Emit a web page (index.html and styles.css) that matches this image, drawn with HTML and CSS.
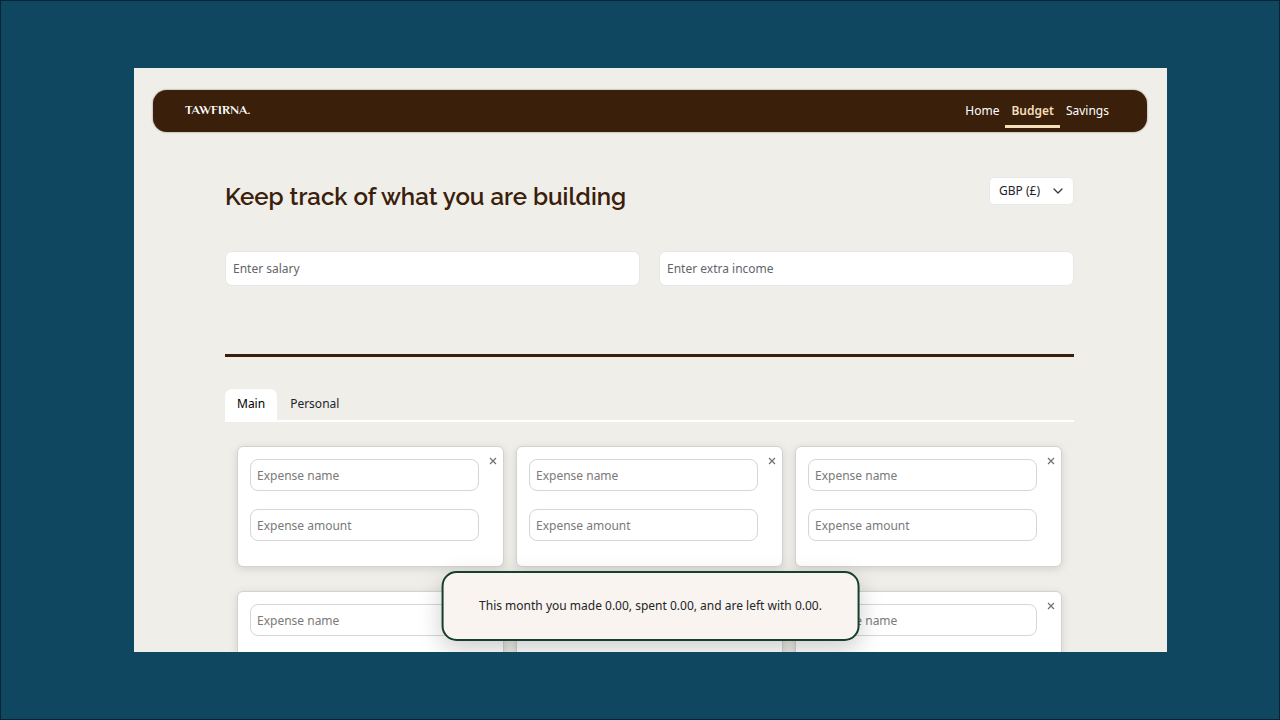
FILE: index.html
```
<!DOCTYPE html>
<html lang="en">
<head>
  <meta charset="UTF-8">
  <meta name="viewport" content="width=device-width, initial-scale=1.0">
  <title>Tawfirna - Budget</title>
  <link rel="stylesheet" href="styles.css">
</head>
<body>

  <div class="window">
    <nav class="navbar">
      <a href="#" class="logo">TAWFIRNA.</a>
      <div class="nav-links">
        <a href="#">Home</a>
        <a href="#" class="active">Budget</a>
        <a href="#">Savings</a>
      </div>
    </nav>

    <main class="container">
      <header class="page-header">
        <h1>Keep track of what you are building</h1>
        <div class="currency">
          <select aria-label="Currency">
            <option>GBP (£)</option>
            <option>USD ($)</option>
            <option>EUR (€)</option>
          </select>
          <svg class="chevron" viewBox="0 0 10 10" aria-hidden="true"><path d="M1 3l4 4 4-4"/></svg>
        </div>
      </header>

      <form class="income">
        <input type="text" placeholder="Enter salary" aria-label="Enter salary">
        <input type="text" placeholder="Enter extra income" aria-label="Enter extra income">
      </form>

      <hr class="divider">

      <div class="tabs">
        <button type="button" class="tab active">Main</button>
        <button type="button" class="tab">Personal</button>
      </div>

      <div class="cards">
        <div class="card">
          <div class="fields">
            <input type="text" placeholder="Expense name" aria-label="Expense name">
            <input type="text" placeholder="Expense amount" aria-label="Expense amount">
          </div>
          <button type="button" class="remove" aria-label="Remove"><svg viewBox="0 0 8 8"><path d="M1 1l6 6M7 1l-6 6"/></svg></button>
        </div>
        <div class="card">
          <div class="fields">
            <input type="text" placeholder="Expense name" aria-label="Expense name">
            <input type="text" placeholder="Expense amount" aria-label="Expense amount">
          </div>
          <button type="button" class="remove" aria-label="Remove"><svg viewBox="0 0 8 8"><path d="M1 1l6 6M7 1l-6 6"/></svg></button>
        </div>
        <div class="card">
          <div class="fields">
            <input type="text" placeholder="Expense name" aria-label="Expense name">
            <input type="text" placeholder="Expense amount" aria-label="Expense amount">
          </div>
          <button type="button" class="remove" aria-label="Remove"><svg viewBox="0 0 8 8"><path d="M1 1l6 6M7 1l-6 6"/></svg></button>
        </div>
        <div class="card">
          <div class="fields">
            <input type="text" placeholder="Expense name" aria-label="Expense name">
          </div>
          <button type="button" class="remove" aria-label="Remove"><svg viewBox="0 0 8 8"><path d="M1 1l6 6M7 1l-6 6"/></svg></button>
        </div>
        <div class="card">
          <div class="fields"></div>
        </div>
        <div class="card">
          <div class="fields">
            <input type="text" placeholder="Expense name" aria-label="Expense name">
          </div>
          <button type="button" class="remove" aria-label="Remove"><svg viewBox="0 0 8 8"><path d="M1 1l6 6M7 1l-6 6"/></svg></button>
        </div>
      </div>
    </main>

    <p class="summary">This month you made 0.00, spent 0.00, and are left with 0.00.</p>
  </div>

</body>
</html>
```
FILE: styles.css
```
* {
  box-sizing: border-box;
}
body {
  margin: 0;
  height: 100vh;
  padding: 67px 112px 67px 133px;
  border: 1px solid #062536;
  background-color: #104760;
  color: #212529;
  font-family: "Noto Sans", sans-serif;
  font-size: 12px;
}
input, select, button {
  font: inherit;
  color: inherit;
}
.window {
  position: relative;
  height: 100%;
  overflow: hidden;
  background-color: #efeee9;
}

/* Navigation bar */
.navbar {
  display: flex;
  justify-content: space-between;
  align-items: center;
  margin: 22px 20px 0 19px;
  padding: 0 32px;
  height: 42px;
  border-radius: 14px;
  background-color: #3a200b;
  box-shadow: 0 0 2px rgba(58, 32, 11, 0.6);
}
.navbar a {
  color: #fff;
  text-decoration: none;
}
.navbar .logo {
  font-family: "El Messiri", "Liberation Serif", serif;
  font-size: 13px;
  font-weight: bold;
}
.nav-links {
  display: flex;
}
.nav-links a {
  padding: 5px 6px 2px;
  line-height: 24px;
  border-bottom: 3px solid transparent;
}
.navbar .nav-links .active {
  color: #f3dfb9;
  font-weight: 600;
  border-bottom-color: #f3dfb9;
}

/* Page content */
.container {
  padding: 45px 93px 0 91px;
}
.page-header {
  display: flex;
  justify-content: space-between;
  align-items: flex-start;
}
h1 {
  margin: 0;
  color: #3a200b;
  font-family: "Raleway", "Lato", sans-serif;
  font-size: 24px;
  font-weight: 600;
  line-height: 40px;
}
.currency {
  position: relative;
}
.currency select {
  appearance: none;
  display: block;
  height: 28px;
  padding: 0 32px 2px 9px;
  border: 1px solid #e6e8ea;
  border-radius: 5px;
  background-color: #fff;
}
.chevron {
  position: absolute;
  top: 9px;
  right: 11px;
  width: 10px;
  height: 10px;
  pointer-events: none;
}
.chevron path {
  fill: none;
  stroke: #343a40;
  stroke-width: 1.3;
  stroke-linecap: round;
  stroke-linejoin: round;
}
.income {
  display: grid;
  grid-template-columns: 1fr 1fr;
  gap: 19px;
  margin-top: 34px;
}
.income input {
  height: 35px;
  padding: 0 7px;
  border: 1px solid #e6e7e8;
  border-radius: 7px;
  background-color: #fff;
}
.income input::placeholder {
  color: #62666a;
}
.divider {
  height: 3px;
  margin: 68px 0 32px;
  border: 0;
  background-color: #3a200b;
}

/* Tabs */
.tabs {
  display: flex;
  gap: 1px;
  border-bottom: 2px solid #fff;
}
.tab {
  height: 31px;
  padding: 0 12px 2px;
  border: 0;
  border-radius: 7px 7px 0 0;
  background: none;
}
.tab.active {
  background-color: #fff;
  color: #000;
}

/* Expense cards */
.cards {
  display: grid;
  grid-template-columns: repeat(3, 1fr);
  gap: 24px 12px;
  padding: 24px 12px;
}
.card {
  display: flex;
  justify-content: space-between;
  align-items: flex-start;
  min-height: 121px;
  padding: 12px 5px 24px 12px;
  border: 1px solid #d2d2d0;
  border-radius: 6px;
  background-color: #fff;
  box-shadow: 0 2px 8px rgba(0, 0, 0, 0.12);
}
.fields {
  display: grid;
  flex: 1;
  gap: 18px;
}
.fields input {
  width: 100%;
  height: 32px;
  padding: 0 6px;
  border: 1px solid #d6d6d6;
  border-radius: 8px;
}
.fields input::placeholder {
  color: #7a7a7a;
}
.remove {
  width: 10px;
  height: 4px;
  margin-left: 9px;
  padding: 0;
  border: 0;
  background: none;
}
.remove svg {
  display: block;
  width: 8px;
  height: 8px;
  margin: -2px auto;
}
.remove path {
  stroke: #707070;
  stroke-width: 1.2;
}

/* Monthly summary floating over the cards */
.summary {
  position: absolute;
  bottom: 11px;
  left: 50%;
  transform: translateX(-50%);
  margin: 0;
  padding: 24px 36px;
  border: 2px solid #173f2e;
  border-radius: 15px;
  background-color: #f9f4f0;
  box-shadow: 0 8px 24px rgba(0, 0, 0, 0.2);
  line-height: 18px;
  white-space: nowrap;
}
```
